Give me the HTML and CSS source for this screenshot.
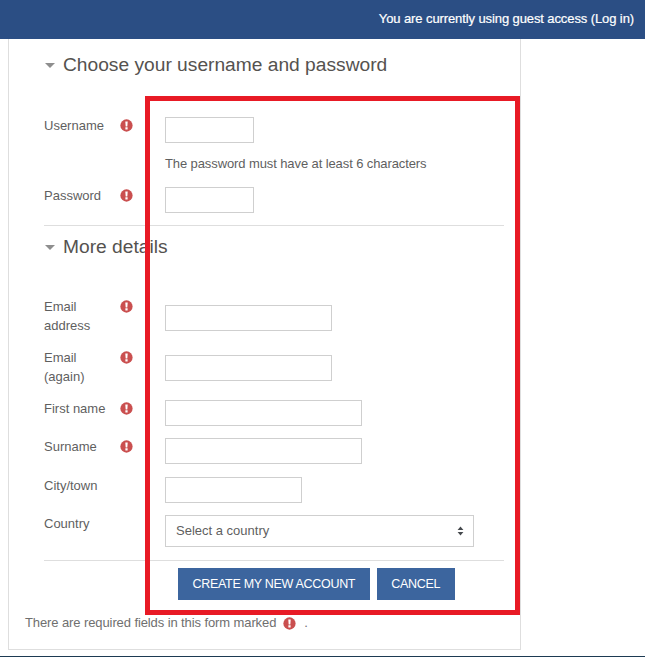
FILE: index.html
```html
<!DOCTYPE html>
<html lang="en">
<head>
  <meta charset="UTF-8">
  <title>New account</title>
  <link rel="stylesheet" href="styles.css">
</head>
<body>
  <header class="navbar">
    <span>You are currently using guest access (Log in)</span>
  </header>
  <main class="card">
    <h2 class="legend legend-first"><span class="caret"></span>Choose your username and password</h2>
    <div class="row row-username">
      <label class="label">Username</label>
      <svg class="req"><use href="#req"></use></svg>
      <input class="field w-s" type="text">
    </div>
    <p class="note">The password must have at least 6 characters</p>
    <div class="row row-password">
      <label class="label">Password</label>
      <svg class="req"><use href="#req"></use></svg>
      <input class="field w-s" type="password">
    </div>
    <h2 class="legend legend-more"><span class="caret"></span>More details</h2>
    <div class="row row-email">
      <label class="label">Email address</label>
      <svg class="req"><use href="#req"></use></svg>
      <input class="field w-m" type="text">
    </div>
    <div class="row row-again">
      <label class="label">Email (again)</label>
      <svg class="req"><use href="#req"></use></svg>
      <input class="field w-m" type="text">
    </div>
    <div class="row row-first">
      <label class="label">First name</label>
      <svg class="req"><use href="#req"></use></svg>
      <input class="field w-l" type="text">
    </div>
    <div class="row row-sur">
      <label class="label">Surname</label>
      <svg class="req"><use href="#req"></use></svg>
      <input class="field w-l" type="text">
    </div>
    <div class="row row-city">
      <label class="label">City/town</label>
      <span class="no-req"></span>
      <input class="field w-c" type="text">
    </div>
    <div class="row row-country">
      <label class="label">Country</label>
      <span class="no-req"></span>
      <div class="select">
        <span>Select a country</span>
        <svg class="updown" viewBox="0 0 8 12"><path d="M4 0.5 7.5 4.8H0.5zM4 11.5 0.5 7.2H7.5z"/></svg>
      </div>
    </div>
    <div class="actions">
      <button class="btn">Create my new account</button>
      <button class="btn">Cancel</button>
    </div>
    <p class="required">There are required fields in this form marked <svg class="req req-inline"><use href="#req"></use></svg> .</p>
  </main>
  <div class="footer"></div>
  <div class="highlight"></div>

  <svg class="defs" width="0" height="0">
    <symbol id="req" viewBox="0 0 14 14">
      <circle cx="7" cy="7" r="6.6" fill="#ca4f4f"/>
      <path d="M5.7 2.8h2.6l-.4 5.2H6.1zM5.8 9h2.4v2.2H5.8z" fill="#fff"/>
    </symbol>
  </svg>
</body>
</html>
```
FILE: styles.css
```css
html, body { height: 100%; }
body { margin: 0; background: #fff; font-family: "Liberation Sans", Arial, sans-serif; font-size: 13px; color: #5f5f5f; position: relative; overflow: hidden; }

.navbar { height: 39px; background: #2b4e84; color: #fff; display: flex; justify-content: flex-end; align-items: center; padding: 0 11px 2px 0; box-sizing: border-box; font-size: 13px; letter-spacing: -0.1px; -webkit-text-stroke: 0.2px #fff; }

.card { margin-left: 8px; width: 513px; height: 611px; box-sizing: border-box; padding: 0 16px 0 35px; border: 1px solid #dedede; border-top: 0; }

.legend { margin: 0; font-size: 19.2px; font-weight: normal; color: #55524f; display: flex; align-items: center; line-height: 24px; }
.legend-first { padding-top: 14px; height: 24px; }
.legend-more { padding-top: 9px; height: 24px; border-top: 1px solid #dedede; }
.caret { width: 0; height: 0; border: 5.5px solid transparent; border-top: 5px solid #8e8e8e; border-bottom: 0; margin: 0 8px 0 1px; }

.row { display: flex; align-items: flex-start; }
.label { width: 76px; line-height: 19px; flex: none; }
.req { width: 13px; height: 13px; flex: none; margin-top: 3px; }
.no-req { width: 13px; flex: none; }
.field { margin-left: 32px; height: 26px; box-sizing: border-box; border: 1px solid #cfcfcf; background: #fff; padding: 0; }
.w-s { width: 89px; }
.w-m { width: 167px; }
.w-l { width: 197px; }
.w-c { width: 137px; }

.row-username { margin-top: 39px; }
.row-username .field { margin-top: 1px; }
.row-password { margin-top: 14px; height: 39px; }
.row-password .field { margin-top: 1px; }
.row-email { margin-top: 38px; height: 51px; }
.row-email .field { margin-top: 8px; }
.row-again { height: 51px; }
.row-again .field { margin-top: 7px; }
.row-first { height: 38px; }
.row-first .field { margin-top: 1px; }
.row-sur { height: 39px; }
.row-sur .field { margin-top: 1px; }
.row-city { height: 38px; }
.row-city .field { margin-top: 1px; }
.row-country { height: 46px; }

.note { margin: 12px 0 0 121px; line-height: 17px; letter-spacing: -0.1px; }

.select { margin: 1px 0 0 32px; width: 309px; height: 32px; box-sizing: border-box; border: 1px solid #cfcfcf; display: flex; justify-content: space-between; align-items: center; padding: 0 9px 1px 10px; }
.updown { width: 7px; height: 10px; fill: #45494d; }

.actions { border-top: 1px solid #dedede; padding: 7px 0 0 134px; display: flex; gap: 7px; }
.btn { height: 32px; padding: 0 14.5px; border: 0; background: #3c659e; color: #fff; font-family: inherit; font-size: 12.5px; letter-spacing: -0.3px; text-transform: uppercase; }

.required { margin: 14px 0 0 -19px; line-height: 18px; color: #6f6f6f; letter-spacing: -0.1px; display: flex; align-items: center; white-space: pre; }
.req-inline { margin: 0 5px 0 3px; }

.footer { position: absolute; left: 0; right: 0; bottom: 0; height: 1px; background: #1d3a52; }

.highlight { position: absolute; left: 145px; top: 96px; width: 375px; height: 519px; box-sizing: border-box; border: 5px solid #e81a25; }
.defs { position: absolute; }
```
